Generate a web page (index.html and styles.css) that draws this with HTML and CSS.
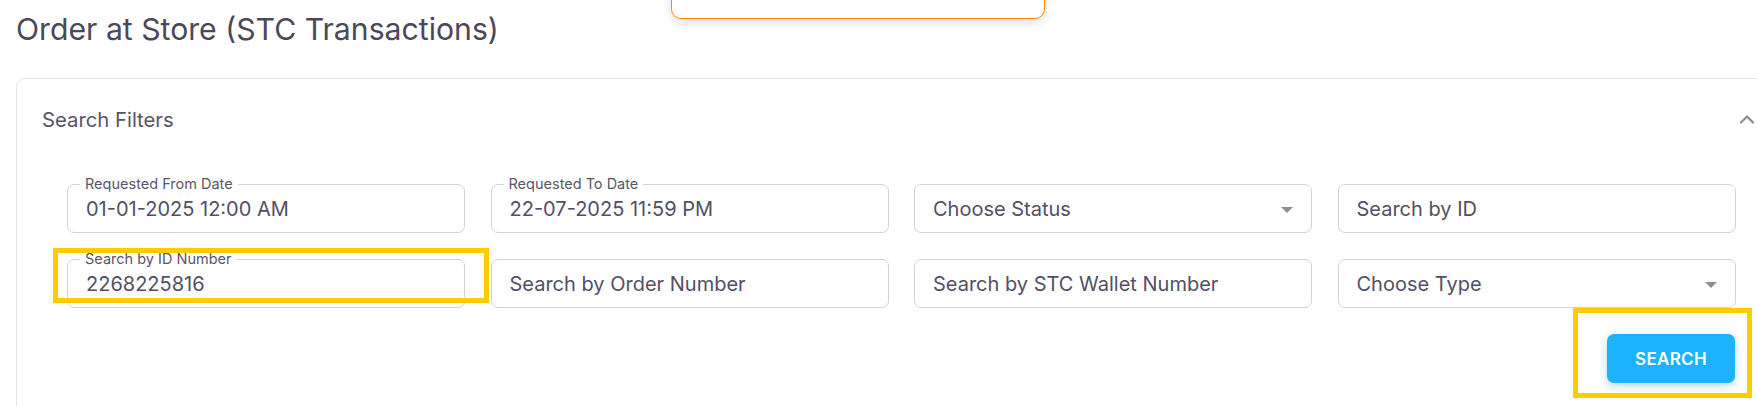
FILE: index.html
```html
<!DOCTYPE html>
<html lang="en">
<head>
<meta charset="utf-8">
<title>Order at Store (STC Transactions)</title>
<link rel="stylesheet" href="styles.css">
</head>
<body>
<div class="page">
  <div class="toast"></div>
  <h1 class="title">Order at Store (STC Transactions)</h1>
  <section class="card">
    <header class="card-head">
      <span class="card-title">Search Filters</span>
      <svg class="chev" width="16" height="10" viewBox="0 0 16 10"><path d="M2 8.5 L8 2.5 L14 8.5" fill="none" stroke="#8d8b95" stroke-width="2.2" stroke-linecap="round" stroke-linejoin="round"/></svg>
    </header>
    <div class="filters">
      <div class="field"><span class="flabel">Requested From Date</span><span class="val">01-01-2025 12:00 AM</span></div>
      <div class="field"><span class="flabel">Requested To Date</span><span class="val">22-07-2025 11:59 PM</span></div>
      <div class="field"><span class="val">Choose Status</span><span class="caret"></span></div>
      <div class="field"><span class="val">Search by ID</span></div>
      <div class="field hl-wrap"><span class="flabel">Search by ID Number</span><span class="val">2268225816</span><span class="hl hl-id"></span></div>
      <div class="field"><span class="val">Search by Order Number</span></div>
      <div class="field"><span class="val">Search by STC Wallet Number</span></div>
      <div class="field"><span class="val">Choose Type</span><span class="caret"></span></div>
    </div>
    <div class="actions">
      <button class="btn">SEARCH<span class="hl hl-btn"></span></button>
    </div>
  </section>
</div>
</body>
</html>
```
FILE: styles.css
```css
* { box-sizing: border-box; }
html, body { margin: 0; padding: 0; background: #fff; overflow: hidden; }
body { font-family: Inter, "Noto Sans", sans-serif; color: #5a5668; }
.page { position: relative; width: 1757px; height: 406px; padding: 10px 0 0 16px; }
.toast {
  position: absolute; left: 671px; top: -40px; width: 374px; height: 59px;
  border: 1.5px solid #ff8c00; border-radius: 10px; background: #fff;
  box-shadow: 0 4px 10px rgba(0,0,0,0.12);
}
.title { margin: 0; font-size: 30.2px; line-height: 38px; font-weight: 400; color: #4c4858; }
.card {
  margin-top: 30px; width: 1770px; height: 340px;
  border: 1px solid #e4e3e7; border-radius: 9px;
}
.card-head {
  height: 80px; display: flex; align-items: center; justify-content: space-between;
  padding: 0 30px 0 25px;
}
.card-title { font-size: 20.3px; color: #57536a; }
.chev { display: block; }
.filters {
  display: grid; grid-template-columns: repeat(4, 398px); column-gap: 25.5px; row-gap: 26px;
  margin: 25px 0 0 50px;
}
.field {
  position: relative; height: 49px; border: 1px solid #d3d2d7; border-radius: 7px;
  display: flex; align-items: center; padding: 0 18px;
}
.flabel {
  position: absolute; top: -10px; left: 12px; padding: 0 5px; background: #fff;
  font-size: 14.5px; line-height: 18px; color: #5a5668;
}
.val { font-size: 20px; color: #534f66; }
.caret {
  position: absolute; right: 18px; top: 22px; width: 0; height: 0;
  border-left: 6px solid transparent; border-right: 6px solid transparent; border-top: 6px solid #8f8d95;
}
.actions { display: flex; justify-content: flex-end; margin: 26px 50px 0 0; }
.btn {
  position: relative; width: 128px; height: 49px; border: 0; border-radius: 7px;
  background: #1bb2fe; color: #fff; font-family: Inter, sans-serif; font-size: 17px; font-weight: 600;
  letter-spacing: 0.3px; box-shadow: 0 3px 8px rgba(27,130,200,0.3);
}
.hl { position: absolute; border: 5px solid #ffcc00; pointer-events: none; }
.hl-id { left: -15px; top: -12px; width: 436px; height: 55px; }
.hl-btn { left: -34px; top: -26px; width: 179px; height: 90px; }
```
